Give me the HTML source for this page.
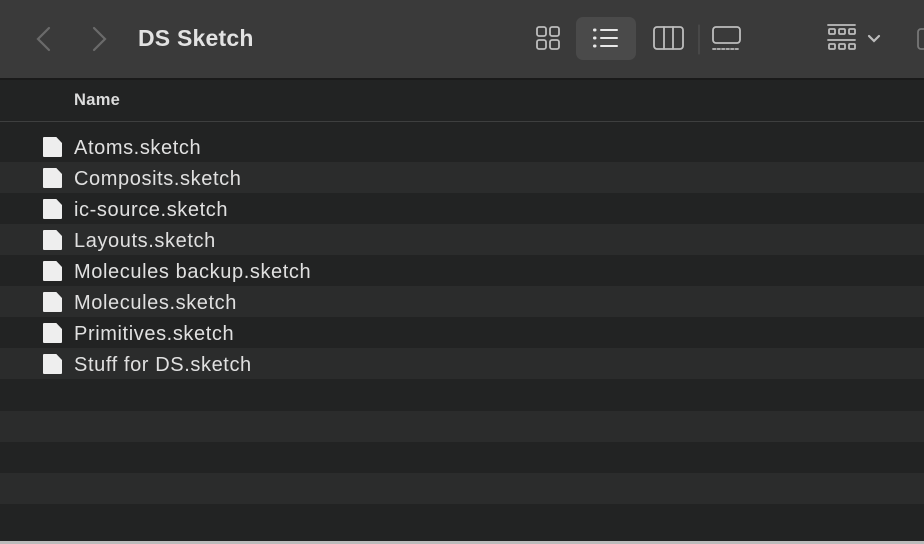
<!DOCTYPE html><html><head><style>
body{margin:0;width:924px;height:544px;overflow:hidden;background:#222323;font-family:"Liberation Sans",sans-serif;position:relative}
.tb{position:absolute;left:0;top:0;width:924px;height:78px;background:#3a3a3a;border-bottom:2px solid #1a1a1a}
.title{position:absolute;left:138px;top:25px;font-size:23px;font-weight:bold;color:#e2e2e2;letter-spacing:0.2px}
.hdr{position:absolute;left:74px;top:91px;font-size:16.5px;font-weight:bold;color:#dcdcdc;letter-spacing:0.3px}
.hl{position:absolute;left:0;top:121px;width:924px;height:1px;background:#3e3f3f}
.row{position:absolute;left:0;width:924px;height:31px}
.row.l{background:#2b2c2c}
.row span{position:absolute;left:74px;top:6px;font-size:20px;letter-spacing:0.6px;color:#e0e0e0}
.row i{position:absolute;left:43px;top:6px;width:19px;height:20px;background:#eee;clip-path:polygon(0 0,70% 0,100% 30%,100% 100%,0 100%);border-radius:1px}
.bl{position:absolute;left:0;top:541px;width:924px;height:3px;background:#bbb}
svg{position:absolute}
</style></head><body>
<div class="tb"></div>
<svg width="924" height="78" style="left:0;top:0" fill="none" stroke-linecap="round">
<path d="M49 28 L38 39 L49 50" stroke="#6a6a6a" stroke-width="2.2"/>
<path d="M94 28 L105 39 L94 50" stroke="#6a6a6a" stroke-width="2.2"/>
<g stroke="#bdbdbd" stroke-width="1.8">
<rect x="537" y="27" width="9" height="9" rx="2"/><rect x="550" y="27" width="9" height="9" rx="2"/>
<rect x="537" y="40" width="9" height="9" rx="2"/><rect x="550" y="40" width="9" height="9" rx="2"/>
</g>
<rect x="576" y="17" width="60" height="43" rx="7" fill="#4a4a4a"/>
<g stroke="#e8e8e8" stroke-width="2"><path d="M601 30H617M601 38H617M601 46H617"/><path d="M594.5 30h.5M594.5 38h.5M594.5 46h.5" stroke-width="3"/></g>
<g stroke="#bdbdbd" stroke-width="1.8">
<rect x="654" y="27" width="29" height="22" rx="3"/><path d="M664 27V49M673 27V49"/>
<path d="M699 25V54" stroke="#555" stroke-width="1"/>
<rect x="713" y="27" width="27" height="16" rx="3"/><path d="M713 49H740" stroke-dasharray="2.5 2"/>
<path d="M828 25H855M828 40H855"/>
<rect x="829" y="29" width="6" height="5" rx="1"/><rect x="839" y="29" width="6" height="5" rx="1"/><rect x="849" y="29" width="6" height="5" rx="1"/>
<rect x="829" y="44" width="6" height="5" rx="1"/><rect x="839" y="44" width="6" height="5" rx="1"/><rect x="849" y="44" width="6" height="5" rx="1"/>
<path d="M869 36l5 5 5-5" stroke-width="2.2"/>
<rect x="918" y="29" width="10" height="20" rx="3" stroke="#777"/>
</g></svg>
<div class="title">DS Sketch</div>
<div class="hdr">Name</div>
<div class="hl"></div>
<div class="row" style="top:131px"><i></i><span>Atoms.sketch</span></div>
<div class="row l" style="top:162px"><i></i><span>Composits.sketch</span></div>
<div class="row" style="top:193px"><i></i><span>ic-source.sketch</span></div>
<div class="row l" style="top:224px"><i></i><span>Layouts.sketch</span></div>
<div class="row" style="top:255px"><i></i><span>Molecules backup.sketch</span></div>
<div class="row l" style="top:286px"><i></i><span>Molecules.sketch</span></div>
<div class="row" style="top:317px"><i></i><span>Primitives.sketch</span></div>
<div class="row l" style="top:348px"><i></i><span>Stuff for DS.sketch</span></div>
<div class="row" style="top:379px"></div>
<div class="row l" style="top:411px"></div>
<div class="row" style="top:442px"></div>
<div class="row l" style="top:473px"></div>
<div class="row" style="top:504px"></div>
<div class="bl"></div>
</body></html>
